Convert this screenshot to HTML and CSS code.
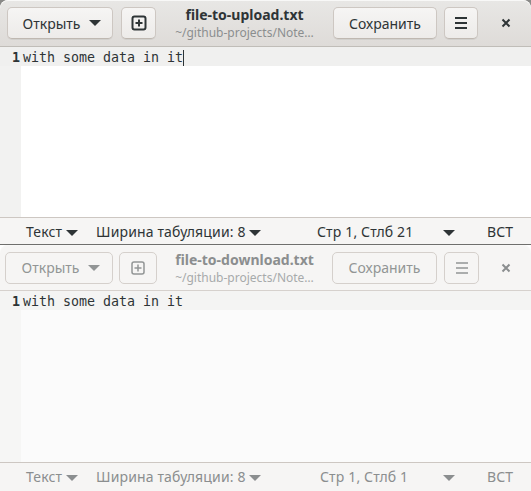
FILE: index.html
```html
<!DOCTYPE html>
<html>
<head>
<meta charset="utf-8">
<link rel="stylesheet" href="styles.css">
</head>
<body>
<div class="win active top">
  <div class="header">
    <button class="btn open">Открыть <span class="tri"></span></button>
    <button class="btn icon plus"><svg width="16" height="16" viewBox="0 0 16 16"><rect x="1.5" y="1.5" width="13" height="13" rx="2" fill="none" stroke="currentColor" stroke-width="2"/><path d="M8 4.5v7M4.5 8h7" stroke="currentColor" stroke-width="2"/></svg></button>
    <div class="title"><div class="t1">file-to-upload.txt</div><div class="t2">~/github-projects/Note…</div></div>
    <button class="btn save">Сохранить</button>
    <button class="btn icon menu"><svg width="16" height="16" viewBox="0 0 16 16"><path d="M2 3h12M2 8h12M2 13h12" stroke="currentColor" stroke-width="2"/></svg></button>
    <div class="close"><svg width="10" height="10" viewBox="0 0 10 10"><path d="M1.5 1.5l7 7M8.5 1.5l-7 7" stroke="currentColor" stroke-width="2"/></svg></div>
  </div>
  <div class="editor">
    <div class="line cur"><span class="num">1</span><span class="code">with some data in it</span><span class="caret"></span></div>
    <div class="rest"><div class="gutter"></div><div class="area"></div></div>
  </div>
  <div class="status">
    <span class="s-lang">Текст <span class="tri"></span></span>
    <span class="s-tab">Ширина табуляции: 8 <span class="tri"></span></span>
    <span class="s-pos">Стр 1, Стлб 21</span>
    <span class="s-dd"><span class="tri"></span></span>
    <span class="s-ins">ВСТ</span>
  </div>
</div>
<div class="win inactive bottom">
  <div class="header">
    <button class="btn open">Открыть <span class="tri"></span></button>
    <button class="btn icon plus"><svg width="16" height="16" viewBox="0 0 16 16"><rect x="2" y="2" width="12" height="12" rx="2" fill="none" stroke="currentColor" stroke-width="1.5"/><path d="M8 4.5v7M4.5 8h7" stroke="currentColor" stroke-width="1.5"/></svg></button>
    <div class="title"><div class="t1">file-to-download.txt</div><div class="t2">~/github-projects/Note…</div></div>
    <button class="btn save">Сохранить</button>
    <button class="btn icon menu"><svg width="16" height="16" viewBox="0 0 16 16"><path d="M2 3h12M2 8h12M2 13h12" stroke="currentColor" stroke-width="1.5"/></svg></button>
    <div class="close"><svg width="10" height="10" viewBox="0 0 10 10"><path d="M1.5 1.5l7 7M8.5 1.5l-7 7" stroke="currentColor" stroke-width="2"/></svg></div>
  </div>
  <div class="editor">
    <div class="line cur"><span class="num">1</span><span class="code">with some data in it</span></div>
    <div class="rest"><div class="gutter"></div><div class="area"></div></div>
  </div>
  <div class="status">
    <span class="s-lang">Текст <span class="tri"></span></span>
    <span class="s-tab">Ширина табуляции: 8 <span class="tri"></span></span>
    <span class="s-pos">Стр 1, Стлб 1</span>
    <span class="s-dd"><span class="tri"></span></span>
    <span class="s-ins">ВСТ</span>
  </div>
</div>
</body>
</html>
```

FILE: styles.css
```css
* { box-sizing: border-box; }
html, body { margin: 0; padding: 0; }
body {
  width: 531px;
  height: 491px;
  overflow: hidden;
  background: #8a8a88;
  font-family: "Noto Sans", "Open Sans", sans-serif;
  font-size: 14px;
  color: #2e3436;
}
.win {
  display: flex;
  flex-direction: column;
  background: #fff;
  overflow: hidden;
}
.win.top {
  height: 245px;
  width: 531px;
  border-radius: 8px 8px 0 0;
  border-bottom: 1px solid #6f6f6d;
}
.win.bottom {
  height: 246px;
  width: 531px;
}
.header {
  height: 47px;
  flex: none;
  display: flex;
  align-items: center;
  padding: 0 0 0 7px;
  border-bottom: 1px solid #c0bdb8;
  background: linear-gradient(#e8e7e5, #dedbd8);
  box-shadow: inset 0 1px #f8f8f7;
  border-radius: 8px 8px 0 0;
}
.inactive .header {
  background: #f6f5f4;
  border-bottom-color: #d6d1cd;
  padding-left: 5px;
  height: 46px;
}
.btn {
  font-family: inherit;
  font-size: 14px;
  color: #2e3436;
  height: 32px;
  border: 1px solid #cdc7c2;
  border-bottom-color: #bfb8b1;
  border-radius: 5px;
  background: linear-gradient(#f6f5f4, #edebe9);
  box-shadow: 0 1px rgba(0,0,0,0.06);
  display: flex;
  align-items: center;
  justify-content: center;
  padding: 0;
}
.inactive .btn {
  background: #f6f5f4;
  border-color: #d5d0cc;
  color: #929595;
  box-shadow: none;
}
.btn.open { width: 106px; gap: 9px; padding-left: 4px; }
.inactive .btn.open { width: 108px; }
.btn.plus { width: 35px; margin-left: 8px; }
.inactive .btn.plus { width: 38px; margin-left: 6px; }
.btn.save { width: 104px; margin-left: 0; }
.inactive .btn.save { width: 105px; }
.btn.menu { width: 34px; margin-left: 7px; }
.inactive .btn.menu { width: 35px; margin-left: 7px; }
.tri {
  display: inline-block;
  width: 0; height: 0;
  border-left: 6px solid transparent;
  border-right: 6px solid transparent;
  border-top: 6px solid currentColor;
  vertical-align: middle;
}
.title {
  width: 177px;
  text-align: center;
  line-height: 16px;
  margin-left: 0;
  padding-top: 2px;
}
.inactive .title { width: 175px; }
.t1 { font-weight: bold; font-size: 14px; color: #2e3436; }
.t2 { font-size: 12px; color: #8b8e8f; margin-top: 2px; }
.inactive .t1 { color: #8b8e8f; }
.inactive .t2 { color: #a7aaab; }
.close {
  flex: 1;
  display: flex;
  justify-content: center;
  padding-left: 2px;
  color: #2e3436;
}
.inactive .close { color: #8b8e8f; }
.editor {
  flex: 1;
  display: flex;
  flex-direction: column;
  font-family: "DejaVu Sans Mono", monospace;
  font-size: 13.3px;
}
.line {
  height: 19px;
  display: flex;
  align-items: center;
  padding-top: 2px;
  background: #f0f0ef;
  flex: none;
}
.inactive .line { background: #f4f4f3; }
.num {
  width: 20px;
  text-align: right;
  font-weight: bold;
  color: #2e3436;
}
.code { color: #2e3436; padding-left: 3px; white-space: pre; }
.caret { width: 1px; height: 16px; background: #2e3436; margin-left: 0; }
.rest { flex: 1; display: flex; }
.gutter { width: 21px; background: #f2f2f1; }
.inactive .gutter { background: #f6f6f5; }
.area { flex: 1; background: #fff; }
.inactive .area { background: #fbfbfb; }
.status {
  height: 27px;
  flex: none;
  display: flex;
  align-items: center;
  background: #f6f5f4;
  border-top: 1px solid #cdc7c2;
  font-size: 14px;
  color: #2e3436;
  letter-spacing: 0.15px;
}
.inactive .status { color: #8b8e8f; height: 29px; padding-bottom: 2px; }
.s-lang { margin-left: 26px; width: 70px; }
.s-tab { width: 221px; }
.s-pos { width: 126px; }
.inactive .s-pos { margin-left: 3px; width: 123px; }
.s-dd { width: 44px; }
.s-ins { }
```
